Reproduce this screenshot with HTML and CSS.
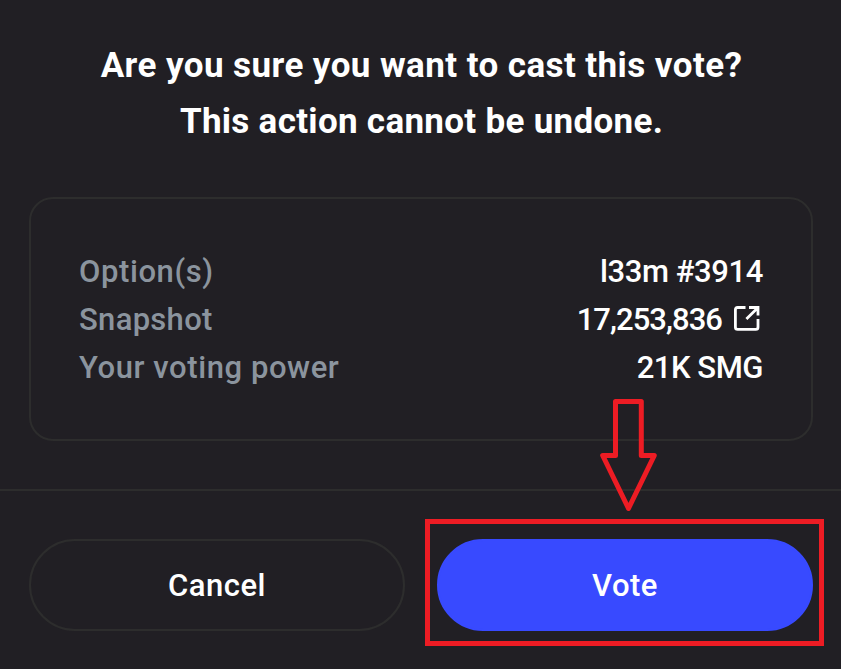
FILE: index.html
```
<!DOCTYPE html>
<html lang="en">
<head>
    <meta charset="utf-8" />
    <meta name="viewport" content="width=device-width,initial-scale=1" />
    <title>Cast vote</title>
    <link rel="stylesheet" href="styles.css">
</head>
<body>
    <div class="modal">
        <div class="content">
            <h1>
                <span class="line-one">Are you sure you want to cast this vote?</span><br>
                <span class="line-two">This action cannot be undone.</span>
            </h1>
            <div class="summary">
                <div class="row">
                    <span class="label label-options">Option(s)</span>
                    <span class="value value-choice">l33m #3914</span>
                </div>
                <div class="row">
                    <span class="label label-snapshot">Snapshot</span>
                    <a class="value value-block"><span>17,253,836</span>
                        <svg class="external" viewBox="0 0 26 26" width="26" height="26">
                            <path d="M11.5 1.5H3.6Q1.4 1.5 1.4 3.7V21.2Q1.4 23.4 3.6 23.4H21.8Q24 23.4 24 21.2V13"/>
                            <path d="M15 1.5H24V9.4M23.6 1.9L12.4 12.9"/>
                        </svg>
                    </a>
                </div>
                <div class="row">
                    <span class="label label-power">Your voting power</span>
                    <span class="value value-power">21K SMG</span>
                </div>
            </div>
        </div>
        <div class="footer">
            <button class="cancel"><span>Cancel</span></button>
            <button class="vote"><span>Vote</span></button>
        </div>
    </div>

    <!-- pointer to the vote button -->
    <svg class="arrow" viewBox="0 0 60 116" width="60" height="116">
        <path d="M16.5 4.5H42.3V58.5H55.3L29.5 111.5L3.7 58.5H16.5Z"/>
    </svg>
    <div class="highlight"></div>
</body>
</html>
```
FILE: styles.css
```
* {margin: 0; padding: 0; box-sizing: border-box;}

body {
    position: relative;
    height: 669px;
    overflow: hidden;
    background: #211f24;
    color: #fff;
    font-family: Roboto, "Liberation Sans", sans-serif;
}

.content {
    height: 489px;
    padding: 38px 28px 0 29px;
}

h1 {
    padding-left: 1px;
    font-size: 35px;
    font-weight: 700;
    line-height: 56px;
    text-align: center;
    white-space: nowrap;
}
.line-one {letter-spacing: 0.42px;}
.line-two {letter-spacing: 0.3px;}

.summary {
    display: flex;
    flex-direction: column;
    height: 244px;
    margin-top: 47px;
    padding: 49px 48px 0;
    border: 2px solid #2d2d2d;
    border-radius: 24px;
}

.row {
    display: flex;
    justify-content: space-between;
    align-items: center;
    height: 48px;
    font-size: 31px;
    font-weight: 500;
    line-height: 48px;
    white-space: nowrap;
}

.label {color: #8b949e;}
.label-options {letter-spacing: 0.6px;}
.label-snapshot {letter-spacing: 0.3px;}
.label-power {letter-spacing: 0.58px;}

.value-choice {letter-spacing: -0.4px;}
.value-power {letter-spacing: -0.45px;}

.value-block {
    display: flex;
    align-items: center;
    gap: 12px;
    padding-right: 3px;
    letter-spacing: -0.95px;
}

.external {
    margin-top: -2px;
    fill: none;
    stroke: #fff;
    stroke-width: 2.8;
}

.footer {
    display: flex;
    gap: 32px;
    height: 180px;
    padding: 48px 28px 0 29px;
    border-top: 2px solid #2d2d2d;
}

button {
    flex: 1;
    height: 92px;
    border: 2px solid #2d2d2d;
    border-radius: 46px;
    background: transparent;
    color: #fff;
    font-family: inherit;
    font-size: 31px;
    font-weight: 500;
    letter-spacing: 0.5px;
}
.vote {
    border-color: #384aff;
    background: #384aff;
}

.arrow {
    position: absolute;
    left: 599px;
    top: 397px;
    fill: none;
    stroke: #ed1c24;
    stroke-width: 5;
    stroke-linejoin: round;
}

.highlight {
    position: absolute;
    left: 425px;
    top: 519px;
    width: 399px;
    height: 127px;
    border: 5px solid #ed1c24;
    pointer-events: none;
}
```
